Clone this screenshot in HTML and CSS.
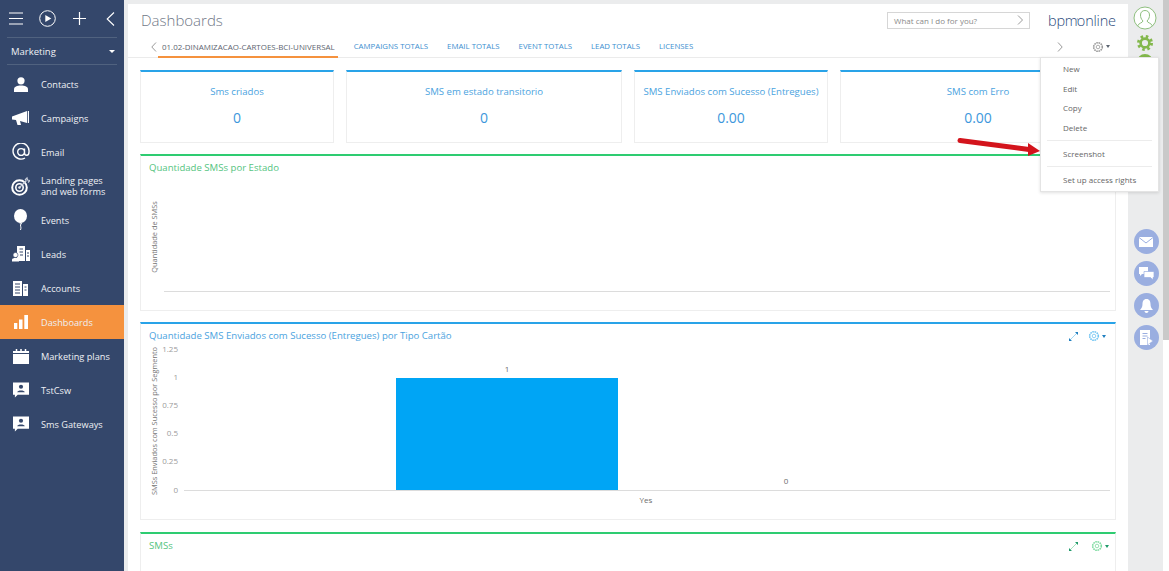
FILE: index.html
```html
<!DOCTYPE html>
<html lang="en">

<head>
    <meta charset="UTF-8">
    <title>Dashboards</title>
    <link rel="stylesheet" href="styles.css">
</head>

<body>
    <aside class="sidebar">
        <div class="side-top">
            <svg class="ico-menu" width="14" height="13" viewBox="0 0 14 13"><path d="M0 1h14M0 6.500h14M0 12h14" stroke="#fff" stroke-width="1.200"/></svg>
            <svg class="ico-play" width="17" height="17" viewBox="0 0 17 17"><circle cx="8.500" cy="8.500" r="7.800" fill="none" stroke="#fff"/><path d="M6.300 5l6 3.500-6 3.500z" fill="#fff"/></svg>
            <svg class="ico-plus" width="13" height="13" viewBox="0 0 13 13"><path d="M6.500 0v13M0 6.500h13" stroke="#fff" stroke-width="1.200"/></svg>
            <svg class="ico-back" width="9" height="14" viewBox="0 0 9 14"><path d="M8 .5L1.200 7 8 13.500" fill="none" stroke="#fff" stroke-width="1.100"/></svg>
        </div>
        <div class="side-section"><span>Marketing</span><i class="caret-white"></i></div>
        <nav class="side-menu">
            <a class="side-item"><span class="side-ico"><svg width="14" height="15" viewBox="0 0 14 15"><circle cx="7" cy="3.800" r="3.600" fill="#fff"/><path d="M0 15v-2.500c0-3 3-4 7-4s7 1 7 4V15z" fill="#fff"/></svg></span>Contacts</a>
            <a class="side-item"><span class="side-ico"><svg width="17" height="14" viewBox="0 0 17 14"><path d="M0 5.500L15 0v12L8 10l1 4H5.500L4 9 0 8.500z" fill="#fff"/><path d="M15.800 0h1.200v12h-1.200z" fill="#fff"/></svg></span>Campaigns</a>
            <a class="side-item"><span class="side-ico"><svg width="18" height="18" viewBox="0 0 18 18"><path d="M13 15A8 8 0 1 1 17 9c0 2-1 3.300-2.300 3.300S12.500 11.300 12.500 10V5.500M12.500 9a3.400 3.400 0 1 1-6.800 0 3.400 3.400 0 0 1 6.800 0z" fill="none" stroke="#fff" stroke-width="1.400"/></svg></span>Email</a>
            <a class="side-item"><span class="side-ico"><svg width="19" height="20" viewBox="0 0 19 20"><circle cx="8.500" cy="11.500" r="7.300" fill="none" stroke="#fff" stroke-width="2"/><circle cx="8.500" cy="11.500" r="3.700" fill="none" stroke="#fff" stroke-width="1.600"/><circle cx="8.500" cy="11.500" r="1.200" fill="#fff"/><path d="M8.500 11.500l7-7M14 4l2-2 .5 2 2.500.5-2 2" stroke="#c9cfdb" stroke-width="1.200" fill="none"/></svg></span><span class="two-line">Landing pages<br>and web forms</span></a>
            <a class="side-item"><span class="side-ico"><svg width="13" height="22" viewBox="0 0 13 22"><ellipse cx="6.500" cy="7" rx="6.500" ry="7" fill="#fff"/><path d="M5.500 14h2l-1 2c0 2 1 2 0 5" fill="none" stroke="#fff"/></svg></span>Events</a>
            <a class="side-item"><span class="side-ico"><svg width="18" height="16" viewBox="0 0 18 16"><path d="M5 0h8v15H5zM14 4h4v11h-4z" fill="#fff"/><circle cx="3.500" cy="9" r="2.500" fill="#fff" stroke="#34476b" stroke-width=".6"/><path d="M0 15.500v-2c0-2 7-2 7 0v2z" fill="#fff"/><path d="M7.500 3h3.500M7.500 6h3.500M8 9h3M15 7h2M15 10h2" stroke="#34476b"/></svg></span>Leads</a>
            <a class="side-item"><span class="side-ico"><svg width="15" height="15" viewBox="0 0 15 15"><path d="M0 0h9v15H0zM10 3h5v12h-5z" fill="#fff"/><path d="M2 3h5M2 6h5M2 9h5M2 12h5M11.500 6h2M11.500 9h2" stroke="#34476b"/></svg></span>Accounts</a>
            <a class="side-item active"><span class="side-ico"><svg width="14" height="14" viewBox="0 0 14 14"><path d="M0 8h3.300v6H0zM5 4.500h3.500V14H5zM10.300 0H14v14h-3.700z" fill="#fff"/></svg></span>Dashboards</a>
            <a class="side-item"><span class="side-ico"><svg width="16" height="15" viewBox="0 0 16 15"><path d="M0 2h16v13H0z" fill="#fff"/><path d="M3.500 0v3M8 0v3M12.500 0v3" stroke="#fff" stroke-width="1.500"/><path d="M0 4.500h16" stroke="#34476b"/></svg></span>Marketing plans</a>
            <a class="side-item"><span class="side-ico"><svg width="16" height="16" viewBox="0 0 17 16"><path d="M0 0h17v13H5l-3 3v-3H0z" fill="#fff"/><circle cx="8.500" cy="4.500" r="2.200" fill="#34476b"/><path d="M4.500 10.500c0-2.800 8-2.800 8 0z" fill="#34476b"/></svg></span>TstCsw</a>
            <a class="side-item"><span class="side-ico"><svg width="16" height="16" viewBox="0 0 17 16"><path d="M0 0h17v13H5l-3 3v-3H0z" fill="#fff"/><circle cx="8.500" cy="4.500" r="2.200" fill="#34476b"/><path d="M4.500 10.500c0-2.800 8-2.800 8 0z" fill="#34476b"/></svg></span>Sms Gateways</a>
        </nav>
    </aside>

    <main class="page">
        <header class="page-head">
            <h1 class="page-title">Dashboards</h1>
            <div class="search">
                <span>What can I do for you?</span>
                <svg width="6" height="10" viewBox="0 0 6 10"><path d="M1 .5L5.500 5 1 9.500" fill="none" stroke="#9a9a9a"/></svg>
            </div>
            <div class="logo">bpm<span class="logo-tick">'</span>online</div>
        </header>

        <div class="tabs">
            <svg class="tab-arrow" width="6" height="10" viewBox="0 0 6 10"><path d="M5 .5L.8 5 5 9.500" fill="none" stroke="#9a9a9a"/></svg>
            <a class="tab current">01.02-DINAMIZACAO-CARTOES-BCI-UNIVERSAL</a>
            <a class="tab">CAMPAIGNS TOTALS</a>
            <a class="tab">EMAIL TOTALS</a>
            <a class="tab">EVENT TOTALS</a>
            <a class="tab">LEAD TOTALS</a>
            <a class="tab">LICENSES</a>
            <svg class="tab-next" width="6" height="10" viewBox="0 0 6 10"><path d="M1 .5L5.200 5 1 9.500" fill="none" stroke="#9a9a9a"/></svg>
            <span class="tab-gear">
                <svg width="12" height="12" viewBox="0 0 12 12"><circle cx="6" cy="6" r="4.300" fill="none" stroke="#9a9a9a" stroke-width="1.600" stroke-dasharray="1.600 .65"/><circle cx="6" cy="6" r="1.800" fill="none" stroke="#9a9a9a" stroke-width=".8"/></svg>
                <i class="caret-dark"></i>
            </span>
        </div>

        <section class="kpis">
            <div class="kpi"><div class="kpi-name">Sms criados</div><div class="kpi-value">0</div></div>
            <div class="kpi"><div class="kpi-name">SMS em estado transitorio</div><div class="kpi-value">0</div></div>
            <div class="kpi"><div class="kpi-name">SMS Enviados com Sucesso (Entregues)</div><div class="kpi-value">0.00</div></div>
            <div class="kpi"><div class="kpi-name">SMS com Erro</div><div class="kpi-value">0.00</div></div>
        </section>

        <section class="panel green panel-a">
            <div class="panel-title">Quantidade SMSs por Estado</div>
            <svg class="chart" width="974" height="130" viewBox="0 0 974 130">
                <text class="axis-name" transform="translate(16 60) rotate(-90)" text-anchor="middle">Quantidade de SMSs</text>
                <path d="M23 114.500H969" stroke="#dcdcdc"/>
            </svg>
        </section>

        <section class="panel blue panel-b">
            <div class="panel-title">Quantidade SMS Enviados com Sucesso (Entregues) por Tipo Cartão</div>
            <div class="panel-tools">
                <svg width="9" height="9" viewBox="0 0 9 9"><path d="M1 8l7-7" stroke="#7cc4ee" stroke-width=".7"/><path d="M0 6l3 3H0zM9 3L6 0h3z" fill="#1f7fc0"/></svg>
                <svg class="tool-gear" width="12" height="12" viewBox="0 0 12 12"><circle cx="6" cy="6" r="4.300" fill="none" stroke="#70c4f2" stroke-width="1.600" stroke-dasharray="1.600 .65"/><circle cx="6" cy="6" r="1.800" fill="none" stroke="#70c4f2" stroke-width=".8"/></svg>
                <i class="caret-blue"></i>
            </div>
            <svg class="chart" width="974" height="174" viewBox="0 0 974 174">
                <text class="axis-name" transform="translate(16 77) rotate(-90)" text-anchor="middle">SMSs Enviados com Sucesso por Segmento</text>
                <text class="tick" x="37" y="8" text-anchor="end">1.25</text>
                <text class="tick" x="37" y="36" text-anchor="end">1</text>
                <text class="tick" x="37" y="64" text-anchor="end">0.75</text>
                <text class="tick" x="37" y="92" text-anchor="end">0.5</text>
                <text class="tick" x="37" y="120" text-anchor="end">0.25</text>
                <text class="tick" x="37" y="149" text-anchor="end">0</text>
                <path d="M43 146.500H969" stroke="#dcdcdc"/>
                <rect x="255" y="34" width="222" height="112" fill="#00a5f5"/>
                <text class="val" x="366" y="28" text-anchor="middle">1</text>
                <text class="val" x="645" y="140" text-anchor="middle">0</text>
                <text class="val" x="505" y="159" text-anchor="middle">Yes</text>
            </svg>
        </section>

        <section class="panel green panel-c">
            <div class="panel-title">SMSs</div>
            <div class="panel-tools">
                <svg width="9" height="9" viewBox="0 0 9 9"><path d="M1 8l7-7" stroke="#7fd6a0" stroke-width=".7"/><path d="M0 6l3 3H0zM9 3L6 0h3z" fill="#1f9a6a"/></svg>
                <svg class="tool-gear" width="12" height="12" viewBox="0 0 12 12"><circle cx="6" cy="6" r="4.300" fill="none" stroke="#7ddba0" stroke-width="1.600" stroke-dasharray="1.600 .65"/><circle cx="6" cy="6" r="1.800" fill="none" stroke="#7ddba0" stroke-width=".8"/></svg>
                <i class="caret-green"></i>
            </div>
        </section>
    </main>

    <aside class="rail">
        <svg width="24" height="24" viewBox="0 0 24 24"><circle cx="12" cy="12" r="11" fill="#fff" stroke="#8fbf7f"/><path d="M4.500 20c1-3 5-3 5.500-5-2-2-2.500-4-2.500-6 0-3 2-4.500 4.500-4.500S16.500 6 16.500 9c0 2-.5 4-2.500 6 .5 2 4.500 2 5.500 5" fill="none" stroke="#8fbf7f"/></svg>
        <svg class="rail-gear" width="16" height="16" viewBox="0 0 16 16"><circle cx="8" cy="8" r="6.300" fill="none" stroke="#83b84c" stroke-width="3.400" stroke-dasharray="2.400 2.550"/><circle cx="8" cy="8" r="4.400" fill="none" stroke="#83b84c" stroke-width="2.600"/></svg>
        <span class="rail-help"></span>
        <div class="rail-comm">
            <span class="round"><svg width="14" height="10" viewBox="0 0 14 10"><path d="M0 0h14v10H0z" fill="#fff"/><path d="M0 .5L7 6l7-5.500" fill="none" stroke="#9aaee0"/></svg></span>
            <span class="round"><svg width="15" height="13" viewBox="0 0 15 13"><path d="M0 0h9v7H3L1 9V7H0z" fill="#fff"/><path d="M5 4.500h10v6h-1V13l-2.500-2.500H5z" fill="#fff" stroke="#9aaee0" stroke-width=".7"/></svg></span>
            <span class="round"><svg width="13" height="14" viewBox="0 0 13 14"><path d="M6.500 0C9.500 0 10.500 2.500 10.500 5c0 3 1 4.500 2.500 6H0c1.500-1.500 2.500-3 2.500-6 0-2.500 1-5 4-5zM4.500 12h4c0 2.500-4 2.500-4 0z" fill="#fff"/></svg></span>
            <span class="round"><svg width="13" height="15" viewBox="0 0 13 15"><path d="M0 0h10v15H0z" fill="#fff"/><path d="M2.500 3.500h5M2.500 6h5M2.500 8.500h3" stroke="#9aaee0"/><path d="M7.500 7l5.500 4-5.500 4z" fill="#fff" stroke="#9aaee0" stroke-width=".6"/></svg></span>
        </div>
    </aside>

    <div class="scrollbar"><div class="thumb"></div></div>

    <!-- gear dropdown -->
    <ul class="menu">
        <li>New</li>
        <li>Edit</li>
        <li>Copy</li>
        <li>Delete</li>
        <li class="sep"></li>
        <li>Screenshot</li>
        <li class="sep"></li>
        <li>Set up access rights</li>
    </ul>

    <svg class="red-arrow" width="84" height="22" viewBox="0 0 84 22">
        <path d="M3 4.500L72 13.500" stroke="#d3141c" stroke-width="5" stroke-linecap="round"/>
        <path d="M71 7l12 8-12 5z" fill="#d3141c"/>
    </svg>
</body>

</html>
```

FILE: styles.css
```css
* {
    margin: 0;
    padding: 0;
    box-sizing: border-box;
}

html, body {
    height: 100%;
    overflow: hidden;
}

body {
    display: flex;
    background: #ebeced;
    font-family: 'Open Sans', sans-serif;
    font-size: 10px;
}

i {
    display: inline-block;
    width: 0;
    height: 0;
}

/* Sidebar */
.sidebar {
    width: 124px;
    flex: none;
    background: #34476b;
    color: #eef0f4;
    margin-right: 4px;
}

.side-top {
    height: 38px;
    margin: 0 7px;
    padding: 0 0 0 2px;
    display: flex;
    align-items: center;
    border-bottom: 1px solid #50627f;
}

.ico-play {
    margin-left: 16px;
}

.ico-plus {
    margin-left: 17px;
}

.ico-back {
    margin-left: 20px;
}

.side-section {
    height: 27px;
    margin: 0 7px;
    padding: 0 0 0 4px;
    display: flex;
    align-items: center;
    justify-content: space-between;
    border-bottom: 1px solid #50627f;
    font-size: 9.5px;
}

.caret-white {
    border: 3px solid transparent;
    border-top: 3.5px solid #fff;
    border-bottom: 0;
    margin-right: 2px;
}

.side-menu {
    padding-top: 2px;
}

.side-item {
    height: 34px;
    display: flex;
    align-items: center;
    padding-left: 9px;
    font-size: 9.2px;
    color: #eef0f4;
}

.side-item.active {
    background: #f5923e;
}

.side-ico {
    width: 23px;
    margin-right: 9px;
    display: flex;
    justify-content: center;
}

.two-line {
    line-height: 11.5px;
}

/* Page */
.page {
    width: 1000px;
    flex: none;
    margin-top: 4px;
    background: #fff;
    padding: 0 12px;
}

.page-head {
    height: 32px;
    display: flex;
    align-items: center;
}

.page-title {
    font-size: 15px;
    font-weight: 300;
    color: #6f7786;
    margin-left: 1px;
    flex: 1;
}

.search {
    width: 143px;
    height: 17px;
    border: 1px solid #d6d6d6;
    padding: 0 6px;
    display: flex;
    align-items: center;
    justify-content: space-between;
    font-size: 8px;
    color: #8a8a8a;
    margin-right: 18px;
}

.logo {
    width: 68px;
    font-size: 14.5px;
    font-weight: 300;
    color: #2c4a7c;
    white-space: nowrap;
    letter-spacing: -.2px;
}

.logo-tick {
    font-size: 8px;
    vertical-align: 3px;
    margin: 0 -1px;
}

.tabs {
    height: 22px;
    display: flex;
    align-items: center;
    border-bottom: 1px solid #ebebeb;
    font-size: 7.8px;
    margin: 0 -12px;
    padding: 0 12px;
}

.tab-arrow {
    margin-left: 11px;
    margin-right: 1px;
}

.tab {
    color: #3d8fd0;
    margin-right: 19px;
    height: 21px;
    line-height: 20px;
    white-space: nowrap;
}

.tab.current {
    color: #5c6470;
    font-size: 7.95px;
    padding: 0 3px 0 4px;
    border-bottom: 2px solid #f5923e;
    margin-right: 16px;
    margin-bottom: -1px;
}

.tab-next {
    margin-left: auto;
    margin-right: 29px;
}

.tab-gear {
    display: flex;
    align-items: center;
    gap: 2px;
    margin-right: 6px;
}

.caret-dark, .caret-blue, .caret-green {
    border: 2.5px solid transparent;
    border-bottom: 0;
    border-top: 3px solid #5b6470;
}

.caret-blue {
    border-top-color: #1f7fc0;
}

.caret-green {
    border-top-color: #1f9a6a;
}

/* KPI row */
.kpis {
    display: grid;
    grid-template-columns: 194px 276px 194px 276px;
    gap: 12px;
    margin-top: 12px;
}

.kpi {
    height: 73px;
    border: 1px solid #eeeeee;
    border-top: 2px solid #29a3e8;
    text-align: center;
    color: #4ba3e0;
}

.kpi-name {
    font-size: 9.6px;
    margin-top: 12px;
    line-height: 15px;
}

.kpi-value {
    font-size: 14px;
    margin-top: 9px;
    line-height: 19px;
    color: #3d97dc;
}

/* Panels */
.panel {
    border: 1px solid #eeeeee;
    border-top-width: 2px;
    position: relative;
}

.panel.green {
    border-top-color: #2ecc71;
}

.panel.blue {
    border-top-color: #29a3e8;
}

.panel-a {
    height: 157px;
    margin-top: 11px;
}

.panel-b {
    height: 198px;
    margin-top: 11px;
}

.panel-c {
    height: 60px;
    margin-top: 12px;
    border-bottom: 0;
}

.panel-title {
    font-size: 9.6px;
    line-height: 14px;
    padding: 5px 0 0 8px;
    white-space: nowrap;
}

.green .panel-title {
    color: #55c47f;
}

.blue .panel-title {
    color: #4ba3e0;
}

.panel-tools {
    position: absolute;
    right: 6px;
    top: 6px;
    display: flex;
    align-items: center;
}

.panel-b .panel-tools {
    right: 9px;
}

.panel-b .tool-gear {
    margin-left: 10px;
}

.tool-gear {
    margin: 0 2px 0 13px;
}

.chart {
    display: block;
}

.panel-a .chart {
    margin-top: 2px;
}

.panel-b .chart {
    margin-top: 1px;
}

.axis-name {
    font-size: 7.4px;
    fill: #757575;
}

.tick {
    font-size: 8px;
    fill: #9b9b9b;
}

.val {
    font-size: 8px;
    fill: #6d6d6d;
}

/* Right rail */
.rail {
    width: 35px;
    flex: none;
    display: flex;
    flex-direction: column;
    align-items: center;
    padding: 6px 1px 0 0;
}

.rail-gear {
    margin-top: 5px;
}

.rail-help {
    width: 16px;
    height: 16px;
    border: 3px solid #83b84c;
    border-radius: 50%;
    margin-top: 3px;
}

.rail-comm {
    margin-top: 159px;
    display: flex;
    flex-direction: column;
    gap: 7px;
    padding-left: 2px;
}

.round {
    width: 25px;
    height: 25px;
    border-radius: 50%;
    background: #9aaee0;
    display: flex;
    align-items: center;
    justify-content: center;
}

.scrollbar {
    width: 6px;
    flex: none;
    background: #fff;
}

.thumb {
    height: 340px;
    background: #c9c9c9;
}

/* Gear dropdown */
.menu {
    position: absolute;
    left: 1040px;
    top: 57px;
    width: 119px;
    height: 135px;
    background: #fff;
    border: 1px solid #e4e4e4;
    box-shadow: 0 1px 3px rgba(0, 0, 0, .12);
    list-style: none;
    padding: 1px 6px;
    font-size: 8px;
    color: #666;
}

.menu li {
    height: 19.7px;
    line-height: 19.7px;
    padding-left: 16px;
    white-space: nowrap;
}

.menu .sep {
    height: 1px;
    padding: 0;
    margin: 2.6px 0;
    background: #ececec;
}

.red-arrow {
    position: absolute;
    left: 957px;
    top: 136px;
}
```
